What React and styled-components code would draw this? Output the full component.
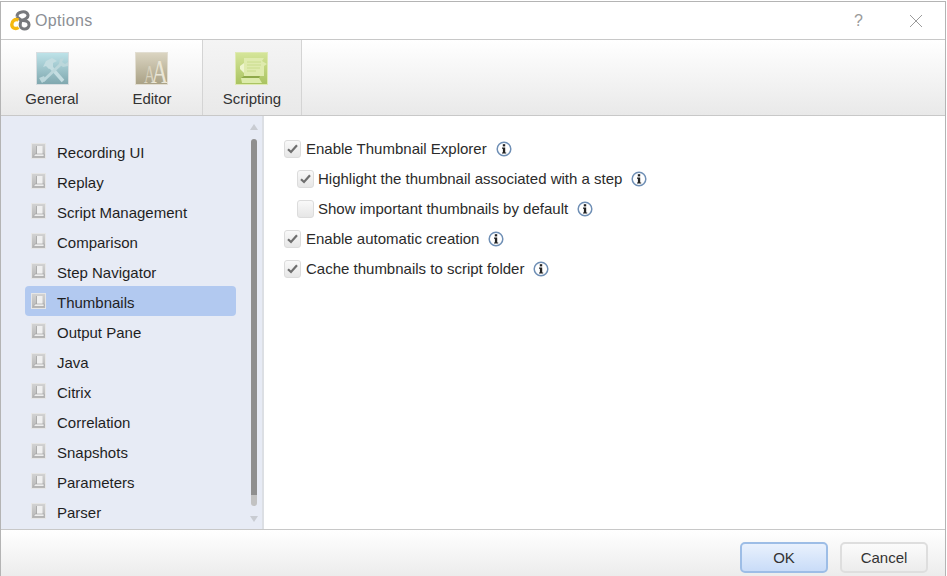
import { createGlobalStyle } from "styled-components";
import styled from "styled-components";

const GlobalStyle = createGlobalStyle`
  html, body {
    margin: 0;
    padding: 0;
    background: #fff;
    overflow: hidden;
  }
  * {
    box-sizing: border-box;
  }
`;

const Win = styled.div`
  display: flex;
  flex-direction: column;
  width: 947px;
  height: 576px;
  padding-top: 1px;
  font-family: "Liberation Sans", Arial, sans-serif;
  font-size: 15px;
  color: #1f1f1f;
`;

const Frame = styled.div`
  display: flex;
  flex-direction: column;
  flex: 1;
  min-height: 0;
  margin-right: 1px;
  border: 1px solid #b4b4b4;
  border-bottom: 0;
`;

const TitleBar = styled.div`
  display: flex;
  align-items: center;
  height: 38px;
  flex: none;
  padding: 0 22px 0 9px;
  border-bottom: 1px solid #c8c8c8;
  background: #fff;
`;

const Title = styled.div`
  margin-left: 4px;
  flex: 1;
  font-size: 16px;
  color: #8c8f95;
  letter-spacing: 0.35px;
`;

const HelpMark = styled.span`
  margin-right: 46px;
  font-size: 16px;
  color: #9a9a9a;
`;

const TabBar = styled.div`
  display: flex;
  height: 76px;
  flex: none;
  border-bottom: 1px solid #c8c8c8;
  background: linear-gradient(#ffffff, #e9e9e9);
`;

const Tab = styled.div`
  display: flex;
  flex-direction: column;
  align-items: center;
  width: 100px;
  padding-top: 12px;
  gap: 5px;
  margin-left: ${props => props.$first ? "1px" : "0"};
  color: #333;
  background: ${props => props.$active ? "linear-gradient(#f4f4f4, #e9e9e9)" : "none"};
  border-right: ${props => props.$active ? "1px solid #d4d4d4" : "0"};
  border-left: ${props => props.$active ? "1px solid #d4d4d4" : "0"};
`;

const TabIcon = styled.svg`
  display: block;
  width: 33px;
  height: 33px;
  flex: none;
  overflow: visible;
  margin-left: ${props => props.$shift ? "-1px" : "0"};
`;

const Body = styled.div`
  display: flex;
  flex: 1;
  min-height: 0;
`;

const Sidebar = styled.div`
  display: flex;
  width: 263px;
  flex: none;
  background: #e7ebf5;
  border-right: 2px solid #dcdfe4;
`;

const NavList = styled.div`
  display: flex;
  flex-direction: column;
  width: 235px;
  flex: none;
  padding: 20px 0 0 24px;
`;

const NavRow = styled.div`
  display: flex;
  align-items: center;
  height: 30px;
  flex: none;
  width: 211px;
  padding-left: 6px;
  gap: 11px;
  border-radius: 4px;
  background: ${props => props.$selected ? "#b2c9f0" : "transparent"};
`;

const NavLabel = styled.span`
  padding-top: 2px;
`;

const Scrollbar = styled.div`
  display: flex;
  flex-direction: column;
  align-items: center;
  width: 8px;
  margin-left: 14px;
  padding: 8px 0 7px;
  flex: none;
`;

const ScrollThumb = styled.div`
  width: 6px;
  flex: 1;
  margin: 9px 0 10px;
  border-radius: 3px;
  background: linear-gradient(#8f8f8f 97%, #c2c2c2 97%);
`;

const Arrow = styled.div`
  width: 0;
  height: 0;
  border-left: 4px solid transparent;
  border-right: 4px solid transparent;
  border-${props => props.$down ? "top" : "bottom"}: 6px solid #c9ccd2;
`;

const Content = styled.div`
  flex: 1;
  display: flex;
  flex-direction: column;
  padding: 18px 0 0 20px;
  background: #fff;
`;

const OptionRow = styled.div`
  display: flex;
  align-items: center;
  height: 30px;
  padding-left: ${props => props.$nested ? "13px" : "0"};
  color: #2b2b2b;
`;

const OptionLabel = styled.span`
  padding-bottom: 2px;
`;

const CheckBox = styled.div`
  display: flex;
  align-items: center;
  justify-content: center;
  width: 17px;
  height: 18px;
  margin-right: ${props => props.$nested ? "4px" : "5px"};
  border: 1px solid #dcdcdc;
  border-radius: 3px;
  background: linear-gradient(#f9f9f9, #e6e6e6);
`;

const InfoIcon = styled.svg`
  width: 16px;
  height: 16px;
  margin-left: 9px;
`;

const Footer = styled.div`
  display: flex;
  justify-content: flex-end;
  align-items: flex-start;
  gap: 12px;
  height: 47px;
  flex: none;
  padding: 12px 17px 0 0;
  border-top: 1px solid #c8c8c8;
  background: linear-gradient(#ffffff, #ececec);
`;

const Button = styled.div`
  display: flex;
  align-items: center;
  justify-content: center;
  width: 88px;
  height: 31px;
  border-radius: 5px;
  color: #333;
  border: 2px solid ${props => props.$primary ? "#9dbde6" : "#dedede"};
  background: ${props => props.$primary
    ? "linear-gradient(#e9f1fd, #c9dcf8)"
    : "linear-gradient(#fbfbfb, #ececec)"};
`;

const navItems = [
  "Recording UI", "Replay", "Script Management", "Comparison", "Step Navigator",
  "Thumbnails", "Output Pane", "Java", "Citrix", "Correlation", "Snapshots",
  "Parameters", "Parser",
];

const options = [
  { label: "Enable Thumbnail Explorer", checked: true },
  { label: "Highlight the thumbnail associated with a step", checked: true, nested: true },
  { label: "Show important thumbnails by default", nested: true },
  { label: "Enable automatic creation", checked: true },
  { label: "Cache thumbnails to script folder", checked: true },
];

const Logo = () => (
  <svg width="21" height="21" viewBox="0 0 21 21" fill="none">
    <path
      d="M7 6.5 C7 1.5 16 0 17.8 4.5 C19 8 14.5 9.5 11 10.5 C16 10 20 12 18.8 16 C17.5 19.8 12 20 10.5 16.5 C9.5 14 11 12 11 10.5 C10 9 8 8 7 6.5"
      stroke="#77797d"
      strokeWidth="3"
    />
    <path d="M8.5 10 C5 8.5 1.8 11 1.8 14.5 C1.8 18.5 6 19.5 8.5 17.5" stroke="#f5b90f" strokeWidth="3.4" />
  </svg>
);

const CloseIcon = () => (
  <svg width="14" height="14" viewBox="0 0 14 14" fill="none" stroke="#9b9b9b" strokeWidth="1">
    <path d="M1 1 L13 13 M13 1 L1 13" />
  </svg>
);

const GeneralIcon = () => (
  <TabIcon viewBox="0 0 33 33">
    <defs>
      <linearGradient id="gen" x1="0" y1="0" x2="0" y2="1">
        <stop offset="0" stopColor="#bfe4ea" />
        <stop offset="1" stopColor="#7ea6ad" />
      </linearGradient>
    </defs>
    <rect width="33" height="33" fill="url(#gen)" />
    <rect x="0.5" y="0.5" width="32" height="32" fill="none" stroke="#d7dde0" />
    <path d="M27 29 L13 13" stroke="#c4dde1" strokeWidth="3.5" />
    <path d="M7 15 L10 9 L16 6 L21 9 L17 11 L17 15 L13 17 L10 14 Z" fill="#c4dde1" />
    <path d="M7 29 L26 11" stroke="#bcd7db" strokeWidth="3" />
    <path d="M24 7 L28 6 L26 10 L29 12 L32 10 L32 14 L27 15 L23 12 Z" fill="#bcd7db" />
    <path d="M3 26 L8 24 L10 28 L6 31 Z" fill="#bcd7db" />
  </TabIcon>
);

const EditorIcon = () => (
  <TabIcon viewBox="0 0 33 33" $shift>
    <defs>
      <linearGradient id="edi" x1="0" y1="0" x2="0" y2="1">
        <stop offset="0" stopColor="#dcd6c3" />
        <stop offset="1" stopColor="#a8a084" />
      </linearGradient>
    </defs>
    <rect width="33" height="33" fill="url(#edi)" />
    <rect x="0.5" y="0.5" width="32" height="32" fill="none" stroke="#e2ded2" />
    <text transform="translate(9 31) scale(0.6 1)" fontFamily="Liberation Serif, serif" fontSize="26" fill="#d9d3bf">A</text>
    <text transform="translate(16.5 31) scale(0.67 1)" fontFamily="Liberation Serif, serif" fontSize="34" fill="#eae6d6">A</text>
  </TabIcon>
);

const ScriptingIcon = () => (
  <TabIcon viewBox="0 0 33 33" $shift>
    <defs>
      <linearGradient id="scr" x1="0" y1="0" x2="0" y2="1">
        <stop offset="0" stopColor="#d6e69b" />
        <stop offset="1" stopColor="#a8c25f" />
      </linearGradient>
    </defs>
    <rect width="33" height="33" fill="url(#scr)" />
    <rect x="0.5" y="0.5" width="32" height="32" fill="none" stroke="#dfeab3" />
    <path d="M9 6 H29 L27 9 L32 12 L29 14 V24 H9 Z" fill="#dfebae" />
    <path d="M5 14 L9 11 V21 L5 17 Z" fill="#eef5cf" />
    <path d="M12 10 H26 M12 13 H26 M12 16 H25 M12 19 H21" stroke="#c9dc8c" strokeWidth="1" />
    <path d="M6 26 H24 L27 31 H7 Z" fill="#dcebab" />
    <path d="M6 26 L9 24 H25 L24 26 Z" fill="#8ea94a" />
  </TabIcon>
);

const NavIcon = () => (
  <svg width="15" height="16" viewBox="0 0 15 16">
    <defs>
      <linearGradient id="nav" x1="0" y1="0" x2="0" y2="1">
        <stop offset="0" stopColor="#d4d4d4" />
        <stop offset="1" stopColor="#b4b4b4" />
      </linearGradient>
    </defs>
    <rect width="15" height="16" fill="url(#nav)" />
    <rect x="0.5" y="0.5" width="14" height="15" fill="none" stroke="#e6e6e6" />
    <path d="M5.5 3 H11.5 V11 H5.5 Z" fill="#f0f0f0" />
    <path d="M2.5 13.5 L4 11 H13 V13.5 Z" fill="#eeeeee" stroke="#a0a0a0" strokeWidth="0.6" />
    <path d="M5.5 3 V11" stroke="#a0a0a0" strokeWidth="0.8" />
  </svg>
);

const CheckMark = () => (
  <svg width="11" height="10" viewBox="0 0 11 10" fill="none" stroke="#6f6f6f" strokeWidth="2.2">
    <path d="M1 5.2 L4 8 L10 1.2" />
  </svg>
);

const Info = () => (
  <InfoIcon viewBox="0 0 16 16">
    <circle cx="8" cy="8" r="6.8" fill="#fff" stroke="#6f8fb5" strokeWidth="1.5" />
    <rect x="6.8" y="3.2" width="2.4" height="2.2" fill="#222" />
    <path d="M6 6.6 H9.2 V11.4 H10.2 V12.6 H6 V11.4 H6.9 V7.8 H6 Z" fill="#222" />
  </InfoIcon>
);

export default function App() {
  return (
    <Win>
      <GlobalStyle />
      <Frame>
        <TitleBar>
          <Logo />
          <Title>Options</Title>
          <HelpMark>?</HelpMark>
          <CloseIcon />
        </TitleBar>
        <TabBar>
          <Tab $first><GeneralIcon />General</Tab>
          <Tab><EditorIcon />Editor</Tab>
          <Tab $active><ScriptingIcon />Scripting</Tab>
        </TabBar>
        <Body>
          <Sidebar>
            <NavList>
              {navItems.map(item => (
                <NavRow key={item} $selected={item === "Thumbnails"}>
                  <NavIcon />
                  <NavLabel>{item}</NavLabel>
                </NavRow>
              ))}
            </NavList>
            <Scrollbar>
              <Arrow />
              <ScrollThumb />
              <Arrow $down />
            </Scrollbar>
          </Sidebar>
          <Content>
            {options.map(option => (
              <OptionRow key={option.label} $nested={option.nested}>
                <CheckBox $nested={option.nested}>{option.checked && <CheckMark />}</CheckBox>
                <OptionLabel>{option.label}</OptionLabel>
                <Info />
              </OptionRow>
            ))}
          </Content>
        </Body>
        <Footer>
          <Button $primary>OK</Button>
          <Button>Cancel</Button>
        </Footer>
      </Frame>
    </Win>
  );
}
